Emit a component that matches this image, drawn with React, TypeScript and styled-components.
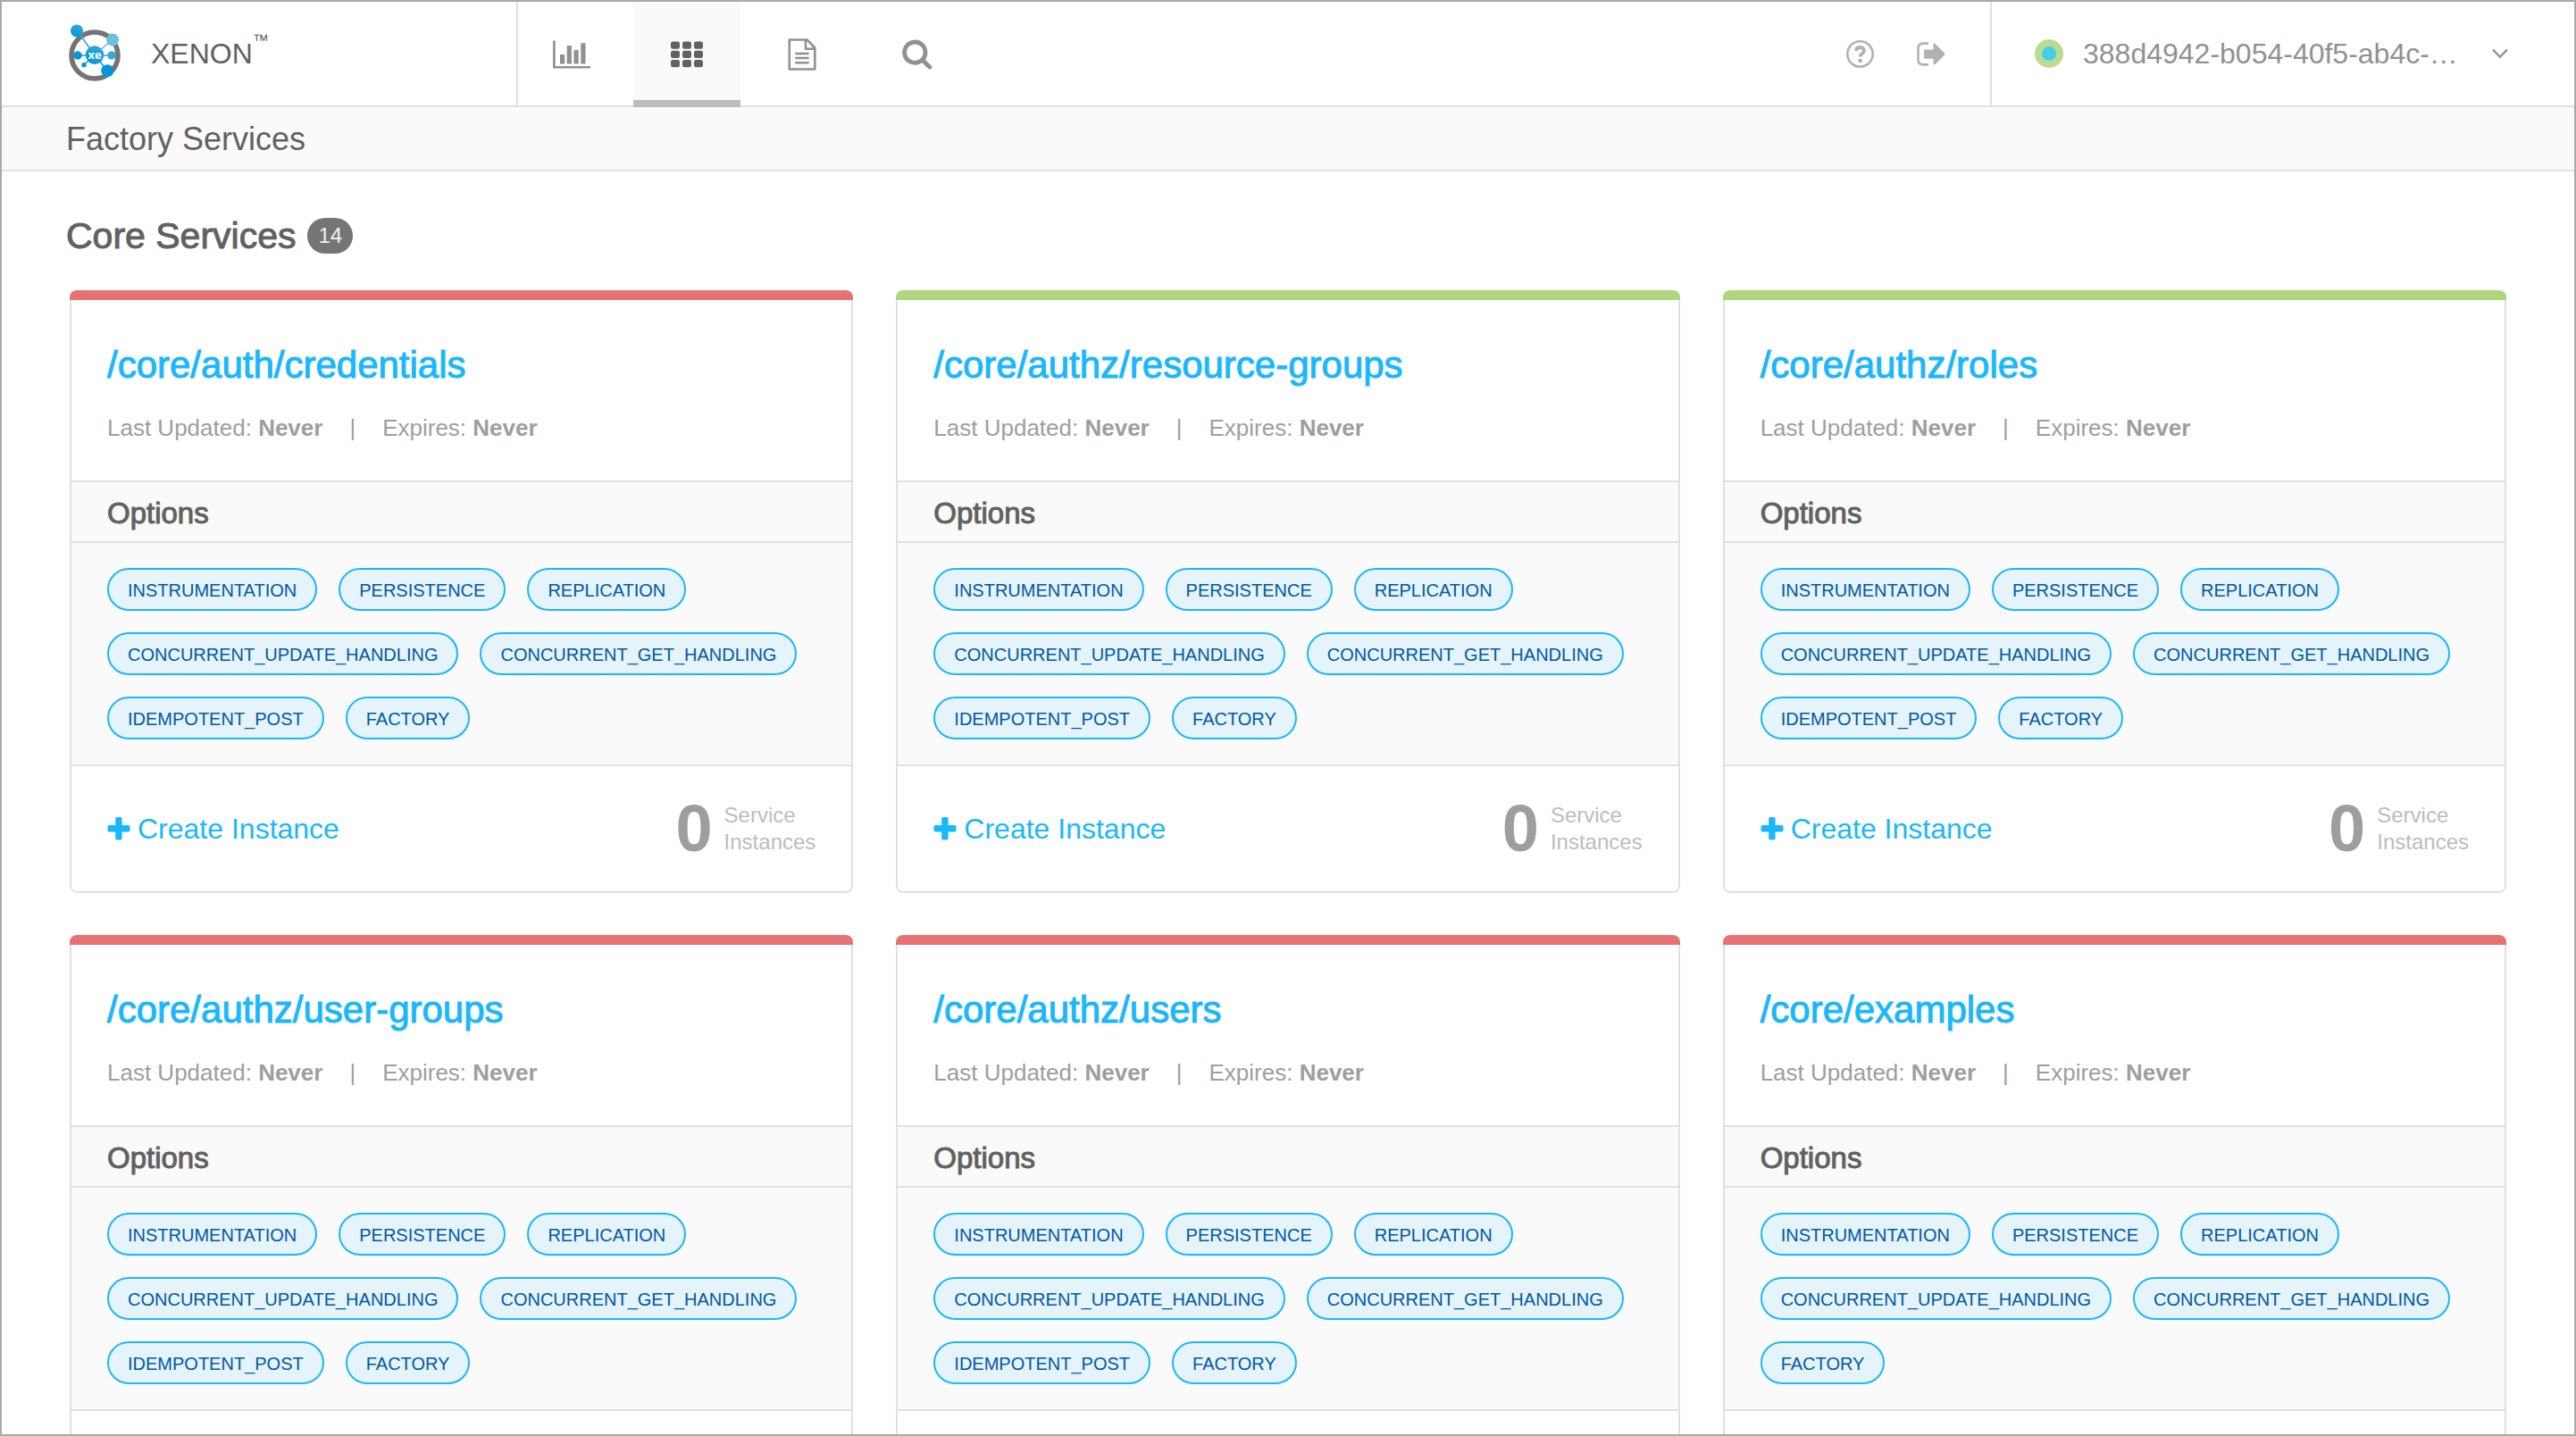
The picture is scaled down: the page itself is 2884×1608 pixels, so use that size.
import React from "react";
import styled, { createGlobalStyle } from "styled-components";

const color = {
  frame: "#a9a9a9",
  line: "#e0e0e0",
  soft: "#fafafa",
  text: "#616161",
  muted: "#9e9e9e",
  faint: "#bdbdbd",
  icon: "#919191",
  link: "#1ab7fd",
  ok: "#add67d",
  bad: "#e87272",
  tagBg: "#e5f3fa",
  tagText: "#0059a3",
};

const GlobalStyle = createGlobalStyle`
  *, *::before, *::after { box-sizing: border-box; }
  body {
    margin: 0;
    background: #fff;
    color: ${color.text};
    font-family: "Liberation Sans", Arial, Helvetica, sans-serif;
  }
  h1, h2, h3, h4, p, ul { margin: 0; padding: 0; font-weight: 400; }
  a { color: inherit; text-decoration: none; }
  svg { display: block; }
`;

const PlainButton = styled.button`
  display: flex;
  align-items: center;
  padding: 0;
  border: 0;
  background: none;
  color: inherit;
  font-family: inherit;
  font-size: 32px;
  cursor: pointer;
`;

const Frame = styled.div`
  display: flex;
  flex-direction: column;
  height: 100vh;
  border: 2px solid ${color.frame};
  background: #fff;
`;

const Header = styled.header`
  display: flex;
  flex: none;
  height: 118px;
  border-bottom: 2px solid ${color.line};
`;

const Brand = styled.a`
  display: flex;
  align-items: center;
  gap: 31px;
  width: 578px;
  padding-left: 72px;
  border-right: 2px solid ${color.line};
  font-size: 32px;
  line-height: 40px;
`;

const BrandName = styled.span`
  display: flex;
  align-items: flex-start;
`;

const Trademark = styled.sup`
  font-size: 18px;
  line-height: 10px;
`;

const Nav = styled.nav`
  display: flex;
  flex: 1;
  gap: 9px;
`;

const NavTab = styled.a<{ $active?: boolean }>`
  display: flex;
  align-items: center;
  justify-content: center;
  width: 120px;
  height: 118px;
  padding-top: 8px;
  border-bottom: 8px solid ${(p) => (p.$active ? color.faint : "transparent")};
  background: ${(p) => (p.$active ? color.soft : "transparent")};
  color: ${(p) => (p.$active ? color.text : color.icon)};
`;

const Tools = styled.div`
  display: flex;
  align-items: center;
  gap: 48px;
  padding-right: 50px;
  color: #b2b2b2;
`;

const NodeMenu = styled(PlainButton)`
  width: 654px;
  padding: 0 74px 0 48px;
  border-left: 2px solid ${color.line};
  color: ${color.icon};
`;

const StatusDot = styled.span`
  width: 32px;
  height: 32px;
  margin-right: 22px;
  border: 8px solid #badc90;
  border-radius: 50%;
  background: #45cfe4;
`;

const NodeName = styled.span`
  flex: 1;
  text-align: left;
  white-space: nowrap;
`;

const SubHeader = styled.div`
  flex: none;
  height: 72px;
  padding: 0 72px;
  border-bottom: 2px solid ${color.line};
  background: ${color.soft};
`;

const PageTitle = styled.h1`
  font-size: 36px;
  line-height: 72px;
`;

const Main = styled.main`
  flex: 1;
  min-height: 0;
  padding: 48px 72px;
  overflow-y: auto;
  scrollbar-width: none;
`;

const SectionTitle = styled.h2`
  display: flex;
  align-items: center;
  gap: 13px;
  margin-bottom: 37px;
  font-size: 41px;
  line-height: 48px;
  -webkit-text-stroke: 1px currentColor;
`;

const Count = styled.span`
  padding: 0 12px;
  border-radius: 20px;
  background: #757575;
  color: #f0f0f0;
  font-size: 24px;
  line-height: 40px;
  -webkit-text-stroke: 0;
`;

const CardGrid = styled.div`
  display: grid;
  grid-template-columns: repeat(3, 1fr);
  gap: 47px 48px;
  margin: 0 4px;
`;

const Card = styled.article`
  display: flex;
  flex-direction: column;
  border-radius: 8px;
  overflow: hidden;
`;

const StatusBar = styled.div<{ $ok: boolean }>`
  height: 11px;
  background: ${(p) => (p.$ok ? color.ok : color.bad)};
`;

const CardBody = styled.div`
  display: flex;
  flex: 1;
  flex-direction: column;
  border: 2px solid ${color.line};
  border-top: 0;
  border-radius: 0 0 8px 8px;
`;

const CardHead = styled.div`
  padding: 48px 40px 41px;
`;

const CardTitle = styled.h3`
  margin-bottom: 27px;
  color: ${color.link};
  font-size: 42px;
  line-height: 50px;
  -webkit-text-stroke: 1px currentColor;
`;

const Meta = styled.p`
  display: flex;
  gap: 30px;
  color: ${color.muted};
  font-size: 26px;
  line-height: 36px;
`;

const OptionsTitle = styled.h4`
  height: 70px;
  padding: 0 40px;
  border: solid ${color.line};
  border-width: 2px 0;
  background: ${color.soft};
  font-size: 33px;
  line-height: 70px;
  -webkit-text-stroke: 1px currentColor;
`;

const TagList = styled.ul`
  display: flex;
  flex: 1;
  flex-wrap: wrap;
  align-content: flex-start;
  gap: 24px;
  padding: 28px 40px;
  background: ${color.soft};
  list-style: none;
`;

const Tag = styled.li`
  height: 48px;
  padding: 0 21px;
  border: 2px solid ${color.link};
  border-radius: 24px;
  background: ${color.tagBg};
  color: ${color.tagText};
  font-size: 20px;
  line-height: 46px;
`;

const CardFoot = styled.div`
  display: flex;
  align-items: center;
  justify-content: space-between;
  height: 142px;
  padding: 0 40px;
  border-top: 2px solid ${color.line};
`;

const CreateButton = styled(PlainButton)`
  gap: 8px;
  color: ${color.link};
`;

const Instances = styled.div`
  display: flex;
  align-items: center;
  gap: 13px;
  color: ${color.faint};
  font-size: 24px;
  line-height: 30px;
`;

const InstanceCount = styled.strong`
  color: ${color.muted};
  font-size: 74px;
  line-height: 72px;
`;

const Logo = () => (
  <svg width="64" height="68" viewBox="0 0 64 68" fill="none" aria-hidden="true">
    <defs>
      <linearGradient id="xe" x1="0.2" y1="1" x2="0.8" y2="0">
        <stop offset="0" stopColor="#0095db" />
        <stop offset="1" stopColor="#35a9d9" />
      </linearGradient>
    </defs>
    <circle cx="32" cy="36" r="26" fill="#fff" stroke="#747477" strokeWidth="5.6" />
    <g stroke="#2ba5da" strokeWidth="1.5">
      <path d="M12 8 32 35.500" />
      <path d="M52 18 32 35.500" stroke="#5cbade" />
      <path d="M13 36H51" />
      <path d="M20 46.500 32 35.500 46 53" stroke="#0095db" />
    </g>
    <circle cx="12" cy="8.500" r="7" fill="url(#xe)" />
    <circle cx="52" cy="18.500" r="7" fill="#6cc0df" />
    <circle cx="13" cy="36" r="4.700" fill="#0095db" />
    <circle cx="51" cy="36" r="4.700" fill="#36aad9" />
    <circle cx="20" cy="46.700" r="2.700" fill="#0095db" />
    <circle cx="46.300" cy="53.300" r="7" fill="#0095db" />
    <circle cx="32" cy="35.600" r="10.300" fill="url(#xe)" />
    <text x="32" y="40" textAnchor="middle" fill="#fff" fontFamily="Open Sans, sans-serif" fontWeight="700" fontSize="13">
      xe
    </text>
  </svg>
);

const ChartIcon = () => (
  <svg width="42" height="32" viewBox="0 0 42 32" fill="currentColor" aria-hidden="true">
    <path d="M0 .4h2.700v28.600H42v2.600H0z" />
    <path d="M8 16h5.200v10.600H8zM15.700 6h5.200v20.600h-5.200zM23.500 11h5.200v15.600h-5.200zM31.300 3.200h5.200v23.400h-5.200z" />
  </svg>
);

const GridIcon = () => (
  <svg width="36" height="30" viewBox="0 0 36 30" fill="currentColor" aria-hidden="true">
    {[0.6, 10.8, 21].map((y) =>
      [0, 13, 26].map((x) => <rect key={`${x}-${y}`} x={x} y={y} width="10" height="8.2" rx="2.2" />)
    )}
  </svg>
);

const DocIcon = () => (
  <svg width="32" height="36" viewBox="0 0 32 36" fill="none" stroke="currentColor" strokeWidth="2.6" strokeLinejoin="round" aria-hidden="true">
    <path d="M1.800 1.500H21.500L30.300 10.500V34.500H1.800zM20 1.500V11.700H30.300" />
    <path d="M8.300 17H23.700M8.300 22H23.700M8.300 27.200H23.700" strokeWidth="2.500" />
  </svg>
);

const SearchIcon = () => (
  <svg width="34" height="34" viewBox="0 0 34 34" fill="none" stroke="currentColor" strokeWidth="4.8" strokeLinecap="round" aria-hidden="true">
    <circle cx="14.300" cy="14.700" r="11.700" />
    <path d="M23.500 24 31 31.200" />
  </svg>
);

const HelpIcon = () => (
  <svg width="31" height="31" viewBox="0 0 31 31" fill="none" stroke="currentColor" aria-hidden="true">
    <circle cx="15.500" cy="15.500" r="14.200" strokeWidth="2.600" />
    <path d="M10.800 11.800C11.800 6.400 20 6.900 19.900 11.900C19.800 15 15.600 15 15.600 18.600" strokeWidth="3.900" />
    <path d="M13.500 21h4.300v4h-4.300z" fill="currentColor" stroke="none" />
  </svg>
);

const ExitIcon = () => (
  <svg width="32" height="27" viewBox="0 0 32 27" fill="none" aria-hidden="true">
    <path d="M13 1.600H7Q1.500 1.600 1.500 7V20Q1.500 25.400 7 25.400H13" stroke="currentColor" strokeWidth="2.600" />
    <path d="M9.500 8.500H18.600V2.500Q19 .8 20.500 2L31 12.300Q32 13.500 31 14.700L20.500 25Q19 26.200 18.600 24.500V18.800H9.500Q8 18.800 8 17.500V9.800Q8 8.500 9.500 8.500Z" fill="currentColor" />
  </svg>
);

const ChevronIcon = () => (
  <svg width="18" height="12" viewBox="0 0 18 12" fill="none" stroke="currentColor" strokeWidth="2.4" aria-hidden="true">
    <path d="M1 1.500 9 9.800 17 1.500" />
  </svg>
);

const PlusIcon = () => (
  <svg width="26" height="26" viewBox="0 0 26 26" fill="currentColor" aria-hidden="true">
    <rect x="9.200" y="0" width="7.400" height="25.500" rx="1.800" />
    <rect x="0.500" y="9" width="25" height="7.400" rx="1.800" />
  </svg>
);

const baseOptions = [
  "INSTRUMENTATION",
  "PERSISTENCE",
  "REPLICATION",
  "CONCURRENT_UPDATE_HANDLING",
  "CONCURRENT_GET_HANDLING",
];
const idempotent = [...baseOptions, "IDEMPOTENT_POST", "FACTORY"];

const services = [
  { path: "/core/auth/credentials", ok: false, options: idempotent },
  { path: "/core/authz/resource-groups", ok: true, options: idempotent },
  { path: "/core/authz/roles", ok: true, options: idempotent },
  { path: "/core/authz/user-groups", ok: false, options: idempotent },
  { path: "/core/authz/users", ok: false, options: idempotent },
  { path: "/core/examples", ok: false, options: [...baseOptions, "FACTORY"] },
];

const ServiceCard = ({ path, ok, options }: { path: string; ok: boolean; options: string[] }) => (
  <Card>
    <StatusBar $ok={ok} />
    <CardBody>
      <CardHead>
        <CardTitle>
          <a href="#service">{path}</a>
        </CardTitle>
        <Meta>
          <span>
            Last Updated: <strong>Never</strong>
          </span>
          <span>|</span>
          <span>
            Expires: <strong>Never</strong>
          </span>
        </Meta>
      </CardHead>
      <OptionsTitle>Options</OptionsTitle>
      <TagList>
        {options.map((option) => (
          <Tag key={option}>{option}</Tag>
        ))}
      </TagList>
      <CardFoot>
        <CreateButton type="button">
          <PlusIcon />
          Create Instance
        </CreateButton>
        <Instances>
          <InstanceCount>0</InstanceCount>
          <span>
            Service
            <br />
            Instances
          </span>
        </Instances>
      </CardFoot>
    </CardBody>
  </Card>
);

export default function App() {
  return (
    <>
      <GlobalStyle />
      <Frame>
        <Header>
          <Brand href="#home">
            <Logo />
            <BrandName>
              XENON<Trademark>™</Trademark>
            </BrandName>
          </Brand>
          <Nav>
            <NavTab href="#dashboard" aria-label="Dashboard"><ChartIcon /></NavTab>
            <NavTab href="#services" aria-label="Services" $active><GridIcon /></NavTab>
            <NavTab href="#logs" aria-label="Logs"><DocIcon /></NavTab>
            <NavTab href="#query" aria-label="Query"><SearchIcon /></NavTab>
          </Nav>
          <Tools>
            <PlainButton type="button" aria-label="Help"><HelpIcon /></PlainButton>
            <PlainButton type="button" aria-label="Sign out"><ExitIcon /></PlainButton>
          </Tools>
          <NodeMenu type="button">
            <StatusDot />
            <NodeName>388d4942-b054-40f5-ab4c-…</NodeName>
            <ChevronIcon />
          </NodeMenu>
        </Header>
        <SubHeader>
          <PageTitle>Factory Services</PageTitle>
        </SubHeader>
        <Main>
          <SectionTitle>
            Core Services <Count>14</Count>
          </SectionTitle>
          <CardGrid>
            {services.map((service) => (
              <ServiceCard key={service.path} {...service} />
            ))}
          </CardGrid>
        </Main>
      </Frame>
    </>
  );
}
